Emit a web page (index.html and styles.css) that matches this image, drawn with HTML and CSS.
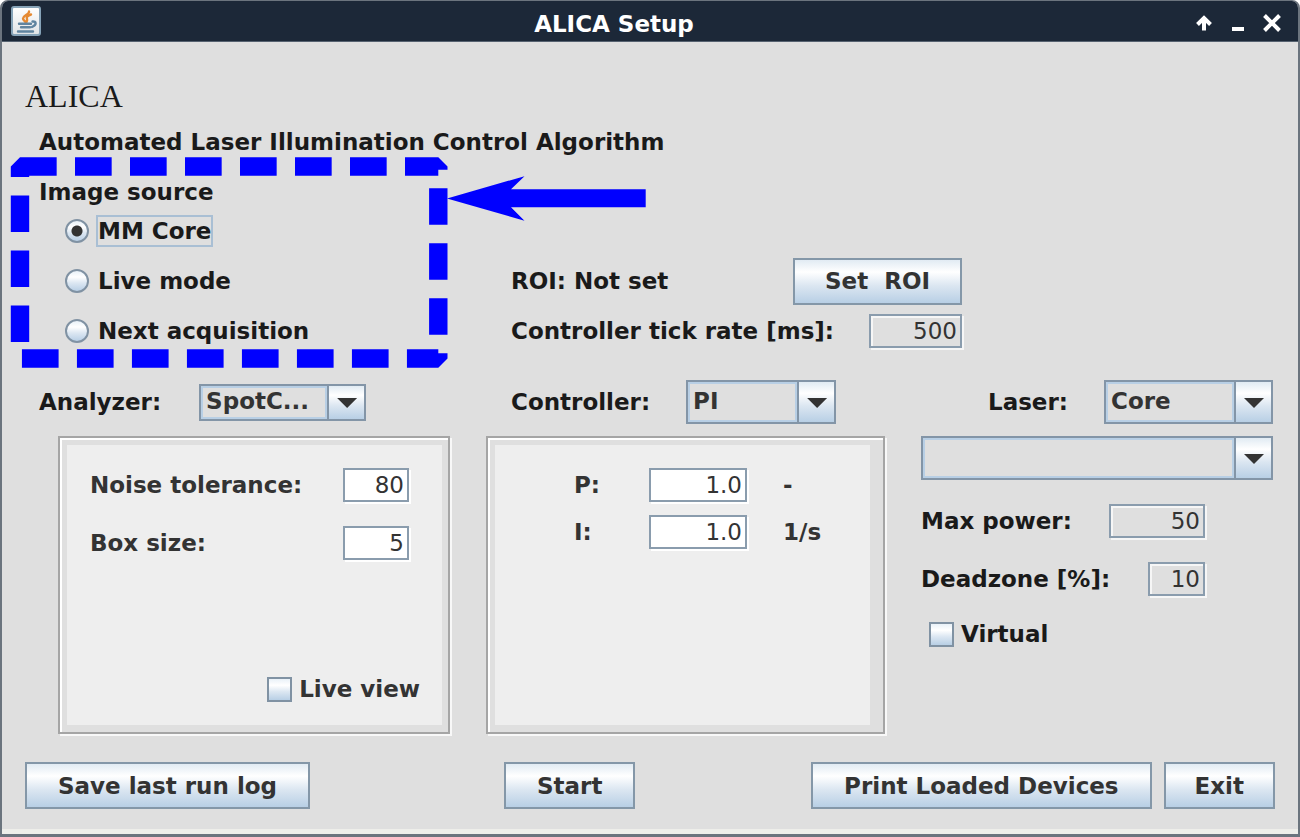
FILE: index.html
```html
<!DOCTYPE html>
<html lang="en">
<head>
<meta charset="utf-8">
<title>ALICA Setup</title>
<link rel="stylesheet" href="styles.css">
</head>
<body>
<div class="window">
  <header class="titlebar">
    <svg class="app-icon" viewBox="0 0 30 30" aria-hidden="true">
      <defs><linearGradient id="tile" x1="0" y1="0" x2="0" y2="1"><stop offset="0" stop-color="#fff"/><stop offset="1" stop-color="#dfe3e6"/></linearGradient></defs>
      <rect x="1" y="1" width="28" height="28" rx="2" fill="url(#tile)" stroke="#86a3b8" stroke-width="2"/>
      <g fill="none" stroke-linecap="round">
        <path d="M18 5.500c.5 3-6 4-6 7 0 1.500 1.500 2 2.500 3.500M20 8.500c-3 1-5 2.500-4 4.500.5 1.200 0 2-.5 3" stroke="#e58a33" stroke-width="2.400"/>
        <path d="M8 17.800h12M10 21.300h9M7 25.500h15" stroke="#5f84a0" stroke-width="2.400"/>
        <path d="M21.500 15.500c4-.5 4.500 3.500-.5 5.500" stroke="#5f84a0" stroke-width="2.400"/>
      </g>
    </svg>
    <span class="titlebar-text">ALICA Setup</span>
    <div class="window-buttons">
      <button type="button" class="window-button" aria-label="Roll up"><svg viewBox="0 0 34 40"><path d="M17 29.500V16.500M10.500 23.500l6.500-6.500 6.500 6.500" fill="none" stroke="#fff" stroke-width="4"/></svg></button>
      <button type="button" class="window-button" aria-label="Minimize"><svg viewBox="0 0 34 40"><path d="M11 28h12" stroke="#fff" stroke-width="4"/></svg></button>
      <button type="button" class="window-button" aria-label="Close"><svg viewBox="0 0 34 40"><path d="M9.500 14.500l15 15M24.500 14.500l-15 15" stroke="#fff" stroke-width="4"/></svg></button>
    </div>
  </header>

  <main class="content">
    <h1 class="heading">ALICA</h1>
    <p class="subtitle">Automated Laser Illumination Control Algorithm</p>

    <section class="acquisition">
      <fieldset class="source">
        <legend class="source-title">Image source</legend>
        <label class="option"><input class="radio" type="radio" name="source" checked><span class="option-text option-text-focused">MM Core</span></label>
        <label class="option"><input class="radio" type="radio" name="source"><span class="option-text">Live mode</span></label>
        <label class="option"><input class="radio" type="radio" name="source"><span class="option-text">Next acquisition</span></label>
      </fieldset>
      <div class="timing">
        <div class="timing-row"><span>ROI: Not set</span><button type="button" class="button button-roi">Set&nbsp; ROI</button></div>
        <div class="timing-row"><label for="tick">Controller tick rate [ms]:</label><input class="field field-flat field-wide" id="tick" value="500"></div>
      </div>
    </section>

    <section class="choosers">
      <div class="chooser chooser-analyzer">
        <label for="analyzer">Analyzer:</label>
        <span class="combo combo-analyzer"><select class="combo-select" id="analyzer"><option>SpotC...</option></select></span>
      </div>
      <div class="chooser chooser-controller">
        <label for="controller">Controller:</label>
        <span class="combo combo-controller"><select class="combo-select" id="controller"><option>PI</option></select></span>
      </div>
      <div class="chooser chooser-laser">
        <label for="laser">Laser:</label>
        <span class="combo combo-laser"><select class="combo-select" id="laser"><option>Core</option></select></span>
      </div>
    </section>

    <section class="panels">
      <div class="panel panel-analyzer">
        <div class="panel-body analyzer-body">
          <div class="analyzer-row"><label for="noise">Noise tolerance:</label><input class="field field-small" id="noise" value="80"></div>
          <div class="analyzer-row"><label for="box">Box size:</label><input class="field field-small" id="box" value="5"></div>
          <label class="check check-live"><input class="checkbox" type="checkbox">Live view</label>
        </div>
      </div>
      <div class="panel panel-controller">
        <div class="panel-body controller-body">
          <label for="gain-p">P:</label><input class="field" id="gain-p" value="1.0"><span>-</span>
          <label for="gain-i">I:</label><input class="field" id="gain-i" value="1.0"><span>1/s</span>
        </div>
      </div>
      <div class="laser">
        <span class="combo combo-device"><select class="combo-select" aria-label="Laser device"><option></option></select></span>
        <div class="laser-row"><label for="power">Max power:</label><input class="field field-flat field-power" id="power" value="50"></div>
        <div class="laser-row"><label for="deadzone">Deadzone [%]:</label><input class="field field-flat field-deadzone" id="deadzone" value="10"></div>
        <label class="check check-virtual"><input class="checkbox" type="checkbox">Virtual</label>
      </div>
    </section>

    <footer class="actions">
      <div class="actions-left"><button type="button" class="button">Save last run log</button></div>
      <div class="actions-right">
        <button type="button" class="button">Start</button>
        <div class="actions-end">
          <button type="button" class="button">Print Loaded Devices</button>
          <button type="button" class="button button-exit">Exit</button>
        </div>
      </div>
    </footer>

    <svg class="callout" width="640" height="216" viewBox="0 0 640 216" aria-hidden="true">
      <path d="M10 11.500H428.300V203.500H10Z" fill="none" stroke="#00f" stroke-width="18.400" stroke-linejoin="bevel" stroke-dasharray="36.670 18.330"/>
      <path d="M437 43.400L514.500 21.200L501 34.300H635.700V52.200H501L514.500 65.700Z" fill="#00f"/>
    </svg>
  </main>
</div>
</body>
</html>
```
FILE: styles.css
```css
* {
  box-sizing: border-box;
}

body {
  margin: 0;
  background: #fff;
  color: #1a1a1a;
  font: bold 23px/28px "DejaVu Sans", sans-serif;
}

button,
input,
select {
  margin: 0;
  font: inherit;
  color: #333;
}

.window {
  display: flex;
  flex-direction: column;
  min-height: 100vh;
  border: solid #6b747e;
  border-width: 1px 2px 3px;
  border-radius: 8px 8px 0 0;
  background: #dfdfdf;
  overflow: hidden;
}

.titlebar {
  display: flex;
  align-items: center;
  height: 41px;
  padding: 0 9px;
  background: #1c2838;
  border-bottom: 1px solid #566270;
  color: #fff;
}

.app-icon {
  width: 30px;
  height: 30px;
}

.titlebar-text {
  flex: 1;
  padding-top: 6px;
  text-align: center;
}

.window-buttons {
  display: flex;
}

.window-button {
  width: 34px;
  height: 40px;
  padding: 0;
  border: 0;
  background: none;
}

.window-button svg {
  display: block;
}

.content {
  position: relative;
  display: flex;
  flex: 1;
  flex-direction: column;
  padding-bottom: 20px;
  border-bottom: 5px solid #eeeeea;
}

.heading {
  margin: 36px 0 0 23px;
  font: 32px/36px "Liberation Serif", serif;
}

.subtitle {
  margin: 14px 0 0 37px;
}

.acquisition {
  display: grid;
  grid-template-columns: 484fr 812fr;
  margin-top: 22px;
}

.source {
  min-width: 0;
  margin: 0;
  padding: 0 0 0 37px;
  border: 0;
}

.source-title {
  padding: 0;
}

.option {
  display: flex;
  align-items: center;
  gap: 7px;
  height: 50px;
  padding-left: 26px;
}

.option-text {
  border: 2px solid transparent;
}

.option-text-focused {
  border-color: #a9bfd4;
}

.radio,
.checkbox {
  flex: none;
  appearance: none;
  border: 2px solid #8092a3;
  background: linear-gradient(#e9f1f8, #fff 30%, #dce7f2 60%, #b8cfe5);
}

.radio {
  width: 24px;
  height: 24px;
  border-radius: 50%;
}

.radio:checked {
  background: radial-gradient(circle, #333 5px, transparent 6px), linear-gradient(#e9f1f8, #fff 30%, #dce7f2 60%, #b8cfe5);
}

.checkbox {
  width: 25px;
  height: 25px;
}

.timing {
  align-self: end;
  width: 476px;
  max-width: 100%;
  padding-left: 25px;
}

.timing-row {
  display: flex;
  align-items: center;
  justify-content: space-between;
  height: 50px;
}

.button {
  height: 47px;
  padding: 0 31px;
  border: 2px solid #8497a8;
  background: linear-gradient(#e1ebf3, #fff 28%, #dbe6f1 60%, #b8cfe5);
  white-space: nowrap;
}

.button-roi {
  padding: 0 30px;
}

.button-exit {
  padding: 0 29px;
}

.field {
  width: 98px;
  height: 34px;
  padding: 0 3px 0 0;
  border: 2px solid #8a9cad;
  background: #fff;
  box-shadow: 2px 2px 0 #fff;
  font-weight: normal;
  text-align: right;
}

.field-flat {
  background: #dfdfdf;
  box-shadow: 2px 2px 0 #f6f6f6, inset 2px 2px 0 #f6f6f6;
}

.field-wide {
  width: 93px;
}

.field-small {
  width: 66px;
}

.field-power {
  width: 96px;
}

.field-deadzone {
  width: 57px;
}

.choosers,
.panels {
  display: grid;
  grid-template-columns: 484fr 435fr 377fr;
}

.choosers {
  margin-top: 24px;
}

.chooser {
  display: flex;
  align-items: center;
  gap: 36px;
}

.chooser-analyzer {
  gap: 38px;
  padding-left: 37px;
}

.chooser-controller {
  padding-left: 25px;
}

.chooser-laser {
  justify-content: flex-end;
  padding-right: 25px;
}

.combo {
  position: relative;
  display: block;
  height: 44px;
}

.combo-analyzer {
  width: 167px;
  height: 37px;
}

.combo-controller {
  width: 150px;
}

.combo-laser {
  width: 169px;
}

.combo-select {
  display: block;
  width: 100%;
  height: 100%;
  padding: 0 36px 2px 5px;
  appearance: none;
  border: 2px solid #8395a7;
  border-radius: 0;
  background: #dfdfdf;
  box-shadow: inset 2px 2px 0 #b8cfe5, inset 0 -2px 0 #b8cfe5;
}

.combo::after {
  content: "";
  position: absolute;
  top: 2px;
  right: 2px;
  bottom: 2px;
  width: 35px;
  border-left: 2px solid #8395a7;
  background: linear-gradient(#e1ebf3, #fff 28%, #dbe6f1 60%, #b8cfe5);
  box-shadow: -2px 0 0 #b8cfe5;
  pointer-events: none;
}

.combo::before {
  content: "";
  position: absolute;
  z-index: 1;
  top: 50%;
  right: 9px;
  width: 20px;
  height: 10px;
  margin-top: -4px;
  background: #333;
  clip-path: polygon(0 0, 100% 0, 50% 100%);
  pointer-events: none;
}

.panels {
  flex: 1;
  margin-top: 12px;
}

.panel {
  display: flex;
  margin-right: 36px;
  padding: 7px;
  border: 2px solid #a5a5a5;
  box-shadow: 2px 2px 0 #f8f8f8, inset 2px 2px 0 #fff;
  color: #333;
}

.panel-analyzer {
  margin-left: 56px;
  padding-right: 6px;
}

.panel-controller {
  padding-right: 13px;
}

.panel-body {
  flex: 1;
  background: #eee;
}

.analyzer-body {
  display: flex;
  flex-direction: column;
  gap: 24px;
  padding: 23px 33px 22px 23px;
}

.analyzer-row {
  display: flex;
  align-items: center;
  justify-content: space-between;
}

.check {
  display: flex;
  align-items: center;
  gap: 7px;
}

.check-live {
  align-self: flex-end;
  margin: auto -11px 0 0;
}

.controller-body {
  display: grid;
  grid-template-columns: 39px 98px auto;
  align-content: start;
  align-items: center;
  gap: 13px 36px;
  padding: 23px 0 0 79px;
}

.laser {
  padding-right: 25px;
}

.laser-row {
  display: flex;
  align-items: center;
  justify-content: space-between;
  width: 284px;
  margin-top: 24px;
}

.check-virtual {
  margin: 24px 0 0 8px;
}

.actions {
  display: grid;
  grid-template-columns: 484fr 812fr;
  margin-top: 28px;
}

.actions-left {
  padding-left: 23px;
}

.actions-right {
  display: flex;
  justify-content: space-between;
  padding: 0 23px 0 18px;
}

.actions-end {
  display: flex;
  gap: 12px;
}

.callout {
  position: absolute;
  top: 113px;
  left: 8px;
  pointer-events: none;
}
```
